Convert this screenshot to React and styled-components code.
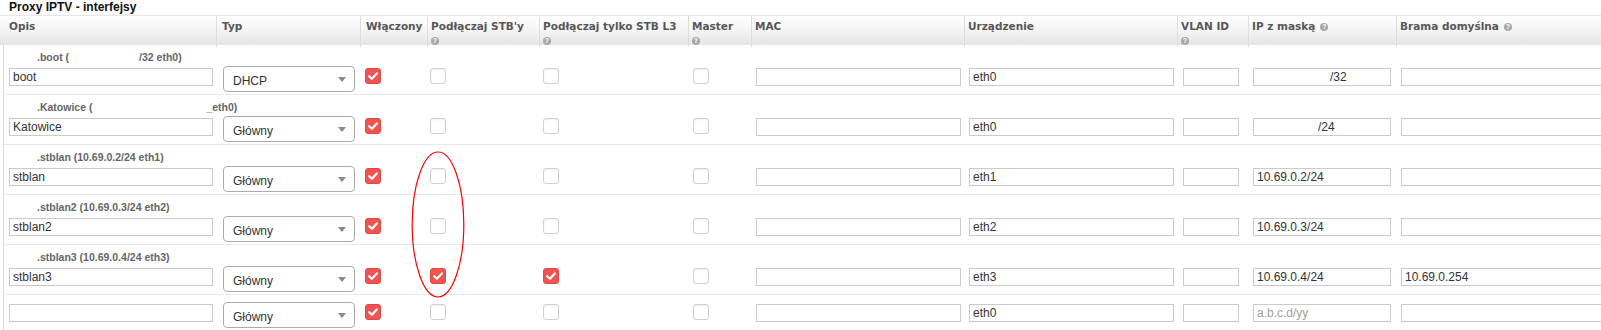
import React from 'react';
import styled, { createGlobalStyle } from 'styled-components';

const GlobalStyle = createGlobalStyle`
  html, body {
    margin: 0;
    padding: 0;
    background: #fff;
    overflow: hidden;
  }
  body {
    font-family: "Liberation Sans", Arial, sans-serif;
  }
  * { box-sizing: border-box; }
`;

const HEAD_COLS = '216px 144px 67px 112px 149px 63px 213px 213px 71px 148px 1fr';
const BODY_COLS = '212px 144px 67px 112px 149px 63px 213px 213px 71px 148px 1fr';

const headers = [
  { title: 'Opis' },
  { title: 'Typ' },
  { title: 'Włączony' },
  { title: "Podłączaj STB'y", help: 'below' },
  { title: 'Podłączaj tylko STB L3', help: 'below' },
  { title: 'Master', help: 'below' },
  { title: 'MAC' },
  { title: 'Urządzenie' },
  { title: 'VLAN ID', help: 'below' },
  { title: 'IP z maską', help: 'inline' },
  { title: 'Brama domyślna', help: 'inline' },
];

const rows = [
  {
    label: [['.boot (', 0], ['/32 eth0)', 70]],
    name: 'boot', typ: 'DHCP', stb: false, l3: false,
    dev: 'eth0', ip: '/32', ipIndent: 73, gw: '',
  },
  {
    label: [['.Katowice (', 0], ['_eth0)', 114]],
    name: 'Katowice', typ: 'Główny', stb: false, l3: false,
    dev: 'eth0', ip: '/24', ipIndent: 61, gw: '',
  },
  {
    label: [['.stblan (10.69.0.2/24 eth1)', 0]],
    name: 'stblan', typ: 'Główny', stb: false, l3: false,
    dev: 'eth1', ip: '10.69.0.2/24', gw: '',
  },
  {
    label: [['.stblan2 (10.69.0.3/24 eth2)', 0]],
    name: 'stblan2', typ: 'Główny', stb: false, l3: false,
    dev: 'eth2', ip: '10.69.0.3/24', gw: '',
  },
  {
    label: [['.stblan3 (10.69.0.4/24 eth3)', 0]],
    name: 'stblan3', typ: 'Główny', stb: true, l3: true,
    dev: 'eth3', ip: '10.69.0.4/24', gw: '10.69.0.254',
  },
  {
    name: '', typ: 'Główny', stb: false, l3: false,
    dev: 'eth0', ip: '', ipPlaceholder: 'a.b.c.d/yy', gw: '',
  },
];

function HelpIcon({ inline }) {
  return <Help $inline={inline}>?</Help>;
}

function Check({ checked }) {
  return (
    <Box $checked={checked}>
      {checked && (
        <svg width="14" height="14" viewBox="0 0 14 14">
          <path d="M3.2 7.2 L5.9 9.7 L10.8 4.4" fill="none" stroke="#fff" strokeWidth="2.2" strokeLinecap="round" strokeLinejoin="round" />
        </svg>
      )}
    </Box>
  );
}

function Select({ value }) {
  return (
    <SelectBox>
      <span>{value}</span>
      <Arrow />
    </SelectBox>
  );
}

export default function App() {
  return (
    <Page>
      <GlobalStyle />
      <Title>Proxy IPTV - interfejsy</Title>
      <Header>
        {headers.map((h, i) => (
          <HeadCell key={i} $first={i === 0} $pl={i === 1 ? 5 : i === 2 ? 5 : 3}>
            <span>{h.title}</span>
            {h.help === 'inline' && <HelpIcon inline />}
            {h.help === 'below' && <div><HelpIcon /></div>}
          </HeadCell>
        ))}
      </Header>
      <Body>
        {rows.map((r, i) => (
          <Row key={i} $bare={!r.label}>
            {r.label && (
              <Label>
                {r.label.map(([text, gap], j) => (
                  <LabelPart key={j} $gap={gap}>{text}</LabelPart>
                ))}
              </Label>
            )}
            <Controls>
              <Cell><Field $w={204}>{r.name}</Field></Cell>
              <Cell $pl={7}><Select value={r.typ} /></Cell>
              <Cell><Check checked /></Cell>
              <Cell $pl={3}><Check checked={r.stb} /></Cell>
              <Cell $pl={4}><Check checked={r.l3} /></Cell>
              <Cell><Check checked={false} /></Cell>
              <Cell><Field $w={205} /></Cell>
              <Cell><Field $w={205}>{r.dev}</Field></Cell>
              <Cell $pl={6}><Field $w={56} /></Cell>
              <Cell>
                <Field $w={138} $indent={r.ipIndent} $muted={!r.ip}>
                  {r.ip || r.ipPlaceholder}
                </Field>
              </Cell>
              <Cell><Field $w={230}>{r.gw}</Field></Cell>
            </Controls>
          </Row>
        ))}
      </Body>
      <Ellipse width="54" height="147" viewBox="0 0 54 147">
        <ellipse cx="27" cy="73.5" rx="25.8" ry="72.5" fill="none" stroke="#f00" strokeWidth="1.2" />
      </Ellipse>
    </Page>
  );
}

const Page = styled.div`
  position: relative;
  width: 1601px;
  height: 330px;
  overflow: hidden;
`;

const Title = styled.div`
  height: 15px;
  line-height: 15px;
  padding-left: 9px;
  font-size: 12px;
  font-weight: bold;
  color: #111;
`;

const Header = styled.div`
  display: grid;
  grid-template-columns: ${HEAD_COLS};
  height: 30px;
  border-top: 1px solid #e6e6e6;
  background: linear-gradient(to bottom, #ffffff 0%, #f3f3f3 55%, #e4e4e4 100%);
`;

const HeadCell = styled.div`
  padding: 3px 0 0 ${p => (p.$first ? 9 : p.$pl)}px;
  border-left: ${p => (p.$first ? 'none' : '1px solid #dddddd')};
  font-family: "DejaVu Sans", Verdana, sans-serif;
  font-size: 10.5px;
  font-weight: bold;
  line-height: 14px;
  color: #575757;
  white-space: nowrap;
`;

const Help = styled.span`
  display: inline-flex;
  align-items: center;
  justify-content: center;
  width: 8px;
  height: 8px;
  margin-left: ${p => (p.$inline ? 5 : 0)}px;
  margin-top: ${p => (p.$inline ? 0 : 2)}px;
  border-radius: 50%;
  background: #a8a8a8;
  color: #fff;
  font-family: "Liberation Sans", Arial, sans-serif;
  font-size: 7px;
  font-weight: bold;
  line-height: 8px;
  vertical-align: 1px;
`;

const Body = styled.div`
  margin-left: 3px;
  border-left: 1px solid #dddddd;
`;

const Row = styled.div`
  padding: ${p => (p.$bare ? '9px 0 4px' : '4px 0 2px')};
  border-bottom: 1px solid #e9e9e9;
`;

const Label = styled.div`
  height: 16px;
  line-height: 16px;
  padding-left: 33px;
  font-size: 10.5px;
  font-weight: bold;
  color: #666;
  white-space: pre;
`;

const LabelPart = styled.span`
  margin-left: ${p => p.$gap}px;
`;

const Controls = styled.div`
  display: grid;
  grid-template-columns: ${BODY_COLS};
  align-items: start;
  ${Label} + & { margin-top: 3px; }
`;

const Cell = styled.div`
  padding-left: ${p => p.$pl ?? 5}px;
`;

const Field = styled.div`
  width: ${p => p.$w}px;
  height: 18px;
  border: 1px solid #cbcbcb;
  background: #fff;
  padding: 0 3px 0 ${p => 3 + (p.$indent || 0)}px;
  font-size: 12px;
  line-height: 16px;
  color: ${p => (p.$muted ? '#a0a0a0' : '#333')};
  white-space: nowrap;
  overflow: hidden;
`;

const SelectBox = styled.div`
  display: flex;
  align-items: center;
  justify-content: space-between;
  width: 132px;
  height: 26px;
  margin-top: -2px;
  padding: 3px 8px 0 9px;
  border: 1px solid #acacac;
  border-radius: 4px;
  background: #fff;
  font-size: 12px;
  color: #333;
`;

const Arrow = styled.span`
  width: 0;
  height: 0;
  margin-top: -2px;
  border-left: 4px solid transparent;
  border-right: 4px solid transparent;
  border-top: 5px solid #8a8a8a;
`;

const Box = styled.div`
  display: flex;
  align-items: center;
  justify-content: center;
  width: 16px;
  height: 16px;
  border-radius: 3px;
  border: 1px solid ${p => (p.$checked ? '#e04a46' : '#d0d0d0')};
  background: ${p => (p.$checked ? '#ee5450' : '#fff')};
  box-shadow: ${p => (p.$checked ? 'none' : 'inset 0 1px 2px rgba(0,0,0,0.06)')};
`;

const Ellipse = styled.svg`
  position: absolute;
  left: 411px;
  top: 151px;
  pointer-events: none;
`;
